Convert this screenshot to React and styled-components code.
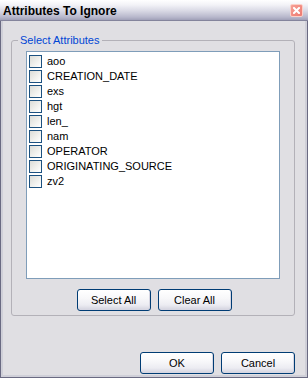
import React from "react";
import styled, { createGlobalStyle } from "styled-components";

const GlobalStyle = createGlobalStyle`
  html, body {
    margin: 0;
    padding: 0;
    background: #e0dfe3;
  }
  body {
    font-family: "Liberation Sans", Arial, sans-serif;
    font-size: 11px;
    color: #000;
  }
`;

const Window = styled.div`
  width: 308px;
  height: 378px;
  display: flex;
  flex-direction: column;
  box-sizing: border-box;
  background: #e0dfe3;
  overflow: hidden;
`;

const TitleBar = styled.div`
  height: 21px;
  flex: none;
  display: flex;
  align-items: center;
  justify-content: space-between;
  padding: 0 5px 0 3px;
  box-sizing: border-box;
  background: linear-gradient(
    to bottom,
    #ffffff 0%,
    #f2f2f7 25%,
    #d8d8e4 55%,
    #b8b8cc 85%,
    #a0a0b8 100%
  );
  border-bottom: 1px solid #84849c;
`;

const Title = styled.span`
  font-family: "Liberation Sans", Arial, sans-serif;
  font-weight: bold;
  font-size: 12px;
  color: #000;
  padding-top: 1px;
`;

const CloseBox = styled.div`
  width: 11px;
  height: 11px;
  display: flex;
  align-items: center;
  justify-content: center;
  background: linear-gradient(135deg, #f6a096 0%, #ee7a70 100%);
  border: 1px solid #fbd0c8;
  border-radius: 2px;
  margin-top: 1px;
`;

const Body = styled.div`
  flex: 1;
  display: flex;
  flex-direction: column;
  padding: 13px 12px 3px 10px;
  border-left: 1px solid #6a6a82;
  border-right: 1px solid #6a6a82;
  border-bottom: 1px solid #6a6a82;
  box-shadow: inset 2px 0 0 #cfcfd8, inset -2px 0 0 #cfcfd8, inset 0 -2px 0 #cfcfd8;
  box-sizing: border-box;
`;

const Group = styled.fieldset`
  margin: 0;
  padding: 4px 14px 4px 14px;
  border: 1px solid #b3b1b8;
  border-radius: 3px;
  min-width: 0;
`;

const Legend = styled.legend`
  color: #0046d5;
  font-size: 11px;
  padding: 0 2px;
  margin-left: -8px;
  line-height: 13px;
`;

const ListBox = styled.div`
  height: 224px;
  background: #fff;
  border: 1px solid #7f9db9;
  padding: 2px 0 0 2px;
  box-sizing: content-box;
  overflow: hidden;
`;

const Row = styled.label`
  display: flex;
  align-items: center;
  height: 15px;
  gap: 5px;
  white-space: nowrap;
`;

const Box = styled.span`
  width: 11px;
  height: 11px;
  flex: none;
  border: 1px solid #1c5180;
  background: linear-gradient(135deg, #dcdcd7 0%, #f2f2ef 60%, #ffffff 100%);
`;

const Label = styled.span`
  font-size: 11px;
  line-height: 15px;
`;

const ButtonRow = styled.div`
  display: flex;
  justify-content: ${(p) => (p.$end ? "flex-end" : "center")};
  gap: 7px;
  margin-top: ${(p) => (p.$end ? "auto" : "10px")};
  padding-left: ${(p) => (p.$end ? "0" : "2px")};
`;

const Button = styled.button`
  width: 74px;
  height: 22px;
  padding: 0;
  font-family: "Liberation Sans", Arial, sans-serif;
  font-size: 11px;
  color: #000;
  border: 1px solid #003c74;
  border-radius: 3px;
  background: linear-gradient(
    to bottom,
    #ffffff 0%,
    #f8f8fa 40%,
    #ececf2 75%,
    #d2d2de 100%
  );
  box-shadow: inset -1px -1px 0 #d6d6e2;
`;

const attributes = [
  "aoo",
  "CREATION_DATE",
  "exs",
  "hgt",
  "len_",
  "nam",
  "OPERATOR",
  "ORIGINATING_SOURCE",
  "zv2",
];

export default function App() {
  return (
    <>
      <GlobalStyle />
      <Window>
        <TitleBar>
          <Title>Attributes To Ignore</Title>
          <CloseBox>
            <svg width="7" height="7" viewBox="0 0 7 7">
              <path
                d="M1 1 L6 6 M6 1 L1 6"
                stroke="#fff"
                strokeWidth="2"
                strokeLinecap="square"
              />
            </svg>
          </CloseBox>
        </TitleBar>
        <Body>
          <Group>
            <Legend>Select Attributes</Legend>
            <ListBox>
              {attributes.map((a) => (
                <Row key={a}>
                  <Box />
                  <Label>{a}</Label>
                </Row>
              ))}
            </ListBox>
            <ButtonRow>
              <Button>Select All</Button>
              <Button>Clear All</Button>
            </ButtonRow>
          </Group>
          <ButtonRow $end>
            <Button>OK</Button>
            <Button>Cancel</Button>
          </ButtonRow>
        </Body>
      </Window>
    </>
  );
}
